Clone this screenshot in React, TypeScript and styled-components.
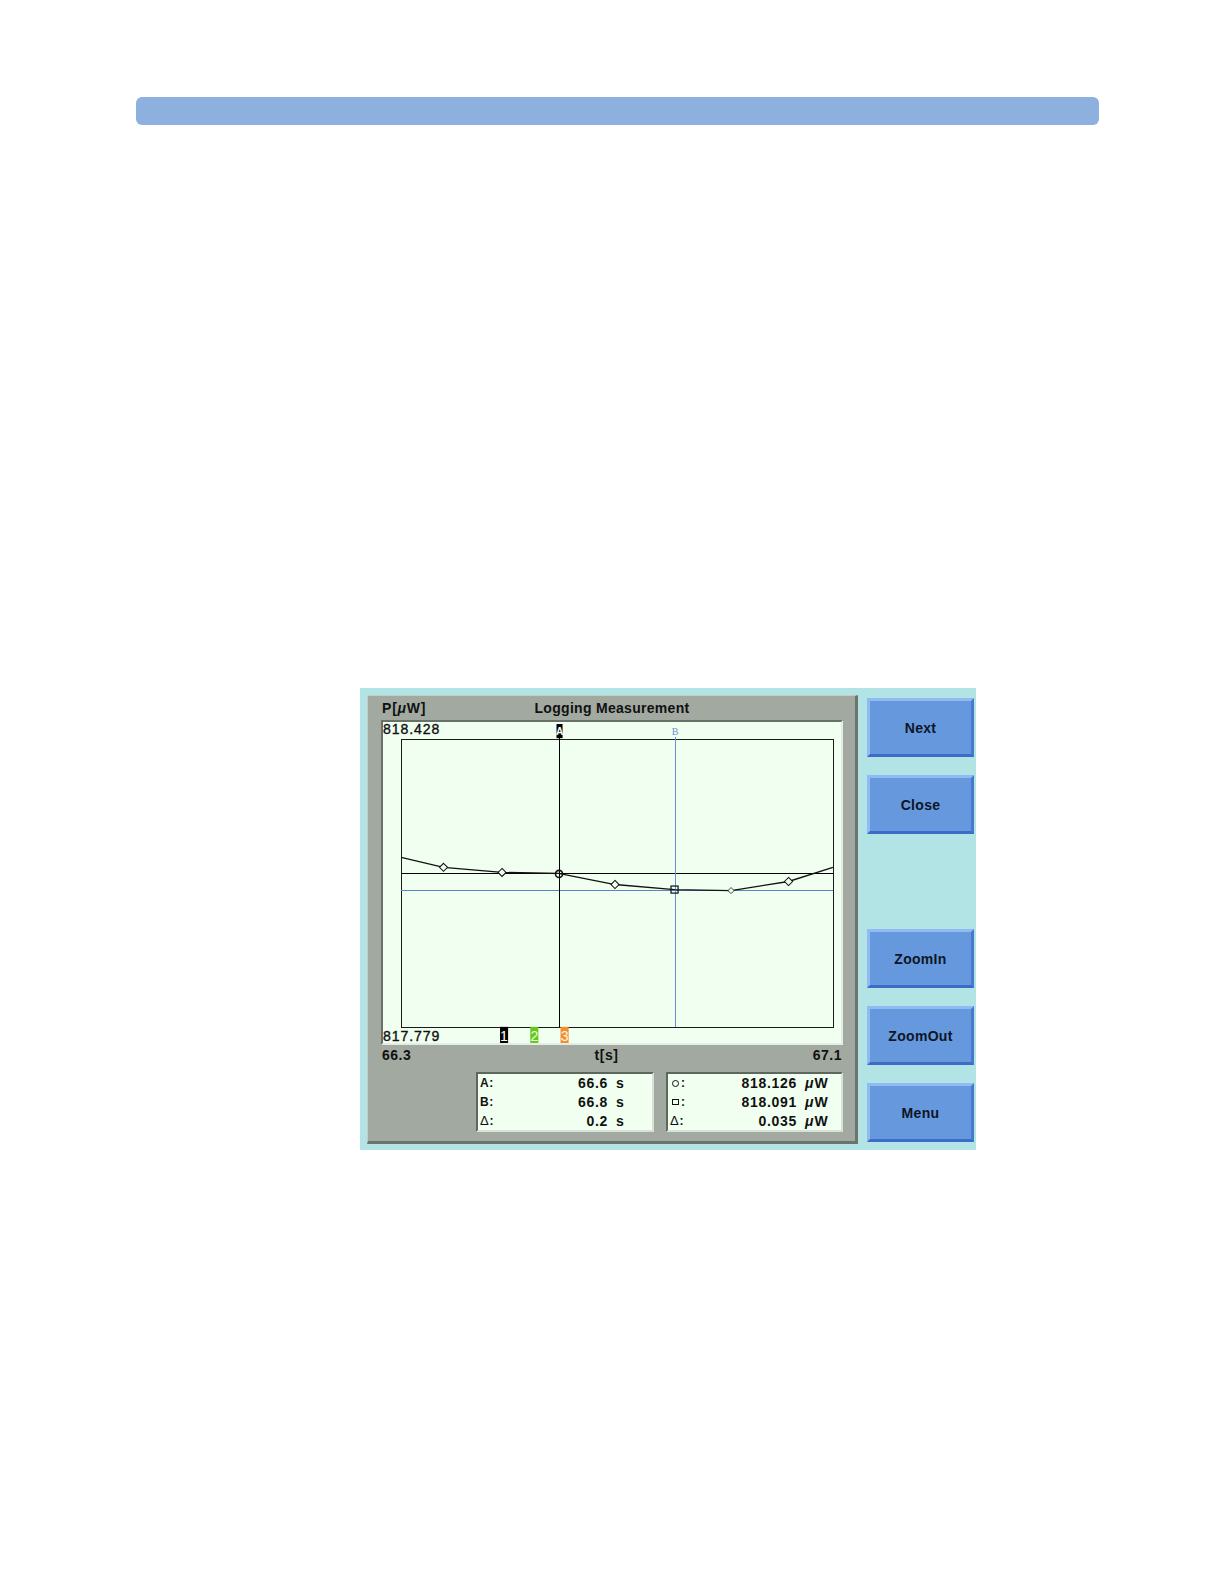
import React from "react";
import styled, { createGlobalStyle } from "styled-components";

const Global = createGlobalStyle`
  html, body { margin: 0; padding: 0; background: #ffffff; }
  body { font-family: "Liberation Sans", Arial, sans-serif; }
`;

const Page = styled.div`
  width: 1222px;
  min-height: 1582px;
  box-sizing: border-box;
  padding-top: 97px;
`;

const HeaderBar = styled.div`
  margin-left: 136px;
  width: 963px;
  height: 28px;
  border-radius: 6px;
  background: #8db0de;
`;

const Device = styled.div`
  margin: 563px 0 0 360px;
  width: 616px;
  height: 462px;
  box-sizing: border-box;
  background: #b2e3e5;
  padding: 7px 2px 6px 7px;
  display: grid;
  grid-template-columns: 491px 107px;
  column-gap: 9px;
  align-items: start;
`;

const Panel = styled.div`
  height: 449px;
  box-sizing: border-box;
  background: #a2a9a0;
  border-top: 1px solid #c4ccc4;
  border-left: 1px solid #c4ccc4;
  border-right: 3px solid #6c746c;
  border-bottom: 3px solid #6c746c;
  padding: 0 12px 9px 13px;
  display: flex;
  flex-direction: column;
  color: #111;
`;

const TitleRow = styled.div`
  height: 24px;
  display: grid;
  grid-template-columns: 1fr auto 1fr;
  align-items: center;
  font-weight: bold;
  font-size: 14px;
  line-height: 18px;
`;

const TitleLeft = styled.span`
  padding-left: 1px;
  letter-spacing: 0.8px;
`;

const Title = styled.span`
  letter-spacing: 0.3px;
`;

const Unit = styled.span`
  font-style: italic;
`;

const PlotBox = styled.div`
  width: 462px;
  height: 325px;
  box-sizing: border-box;
  background: #f0fff0;
  border-style: solid;
  border-width: 2px;
  border-color: #687068 #e4ece4 #e4ece4 #687068;
`;

const ChartSvg = styled.svg`
  display: block;
  font-family: "Liberation Sans", Arial, sans-serif;
`;

const AxisRow = styled.div`
  height: 19px;
  margin-bottom: 8px;
  display: grid;
  grid-template-columns: 1fr auto 1fr;
  align-items: center;
  font-weight: bold;
  font-size: 14px;
  line-height: 18px;
  letter-spacing: 0.5px;
`;

const AxisLeft = styled.span`
  padding-left: 1px;
`;

const AxisCenter = styled.span`
  padding-right: 11px;
`;

const AxisRight = styled.span`
  text-align: right;
  padding-right: 1px;
`;

const InfoRow = styled.div`
  display: flex;
  justify-content: flex-end;
  gap: 12px;
`;

const InfoBox = styled.div<{ $w: number }>`
  width: ${(p) => p.$w}px;
  height: 60px;
  box-sizing: border-box;
  background: #f0fff0;
  border-style: solid;
  border-width: 2px;
  border-color: #5e665e #d8e0d8 #d8e0d8 #5e665e;
  padding: 0 0 0 2px;
  display: grid;
  grid-template-columns: 1fr auto 36px;
  grid-template-rows: repeat(3, 1fr);
  column-gap: 8px;
  align-items: center;
  font-weight: bold;
  font-size: 14px;
  line-height: 18px;
  letter-spacing: 0.7px;
`;

const Label = styled.span`
  display: flex;
  align-items: center;
  font-size: 12px;
`;

const Value = styled.span`
  text-align: right;
`;

const UnitCell = styled.span`
  letter-spacing: 1px;
`;

const CircleMark = styled.span`
  display: inline-block;
  width: 5px;
  height: 5px;
  border: 1px solid #111;
  border-radius: 50%;
  margin: 0 2px 0 2px;
`;

const SquareMark = styled.span`
  display: inline-block;
  width: 5px;
  height: 4px;
  border: 1px solid #111;
  margin: 0 2px 0 2px;
`;

const DeltaMark = styled.span`
  font-weight: normal;
  font-size: 13px;
`;

const ButtonColumn = styled.div`
  padding-top: 3px;
  display: grid;
  grid-template-rows: repeat(6, 59px);
  row-gap: 18px;
`;

const SoftKey = styled.button`
  width: 107px;
  height: 59px;
  margin: 0;
  padding: 0;
  box-sizing: border-box;
  background: #6598dc;
  border-style: solid;
  border-width: 3px;
  border-color: #90baf2 #4a78d0 #3d6bc8 #90baf2;
  font-family: "Liberation Sans", Arial, sans-serif;
  font-weight: bold;
  font-size: 14px;
  color: #0e1626;
  letter-spacing: 0.3px;
`;

const EmptySlot = styled.div``;

const points: [number, number][] = [
  [20, 136],
  [62, 146],
  [120, 151],
  [176, 152],
  [232, 163],
  [291, 168],
  [347, 169],
  [404, 160],
  [448, 146],
];

const diamond = (x: number, y: number, r = 4) =>
  `M${x} ${y - r} L${x + r} ${y} L${x} ${y + r} L${x - r} ${y} Z`;

const Chart: React.FC = () => (
  <ChartSvg width={458} height={321} viewBox="2 2 454 318" preserveAspectRatio="none">
    <g shapeRendering="crispEdges">
      <rect x={20.5} y={19.5} width={428} height={285} fill="none" stroke="#1a1a1a" strokeWidth={1} />
      <line x1={20} y1={152.5} x2={448} y2={152.5} stroke="#000" strokeWidth={1} />
      <line x1={20} y1={168.5} x2={448} y2={168.5} stroke="#5a82cc" strokeWidth={1} />
      <line x1={176.5} y1={5} x2={176.5} y2={304} stroke="#000" strokeWidth={1} />
      <line x1={291.5} y1={17} x2={291.5} y2={304} stroke="#6a8fd2" strokeWidth={1} />
    </g>
    <polyline
      points={points.map((p) => p.join(",")).join(" ")}
      fill="none"
      stroke="#111"
      strokeWidth={1.3}
    />
    {[points[1], points[2], points[4], points[7]].map(([x, y], i) => (
      <path key={i} d={diamond(x, y)} fill="#f0fff0" stroke="#111" strokeWidth={1} />
    ))}
    <path d={diamond(347, 169, 3)} fill="#f0fff0" stroke="#333" strokeWidth={0.9} />
    <circle cx={176.5} cy={152.5} r={3.5} fill="none" stroke="#111" strokeWidth={1.6} />
    <rect x={287.5} y={164.5} width={7} height={7} fill="none" stroke="#111" strokeWidth={1.2} />
    <rect x={174} y={4} width={6} height={14} fill="#000" />
    <text x={177} y={15} fontSize={10} fill="#fff" textAnchor="middle" fontWeight="bold">A</text>
    <text x={291.5} y={15} fontSize={10} fill="#6a8fd2" textAnchor="middle" fontFamily="Liberation Serif, serif">B</text>
    <text x={2} y={14} fontSize={14} fill="#111" stroke="#111" strokeWidth={0.35} letterSpacing={0.9}>818.428</text>
    <text x={2} y={318} fontSize={14} fill="#111" stroke="#111" strokeWidth={0.35} letterSpacing={0.9}>817.779</text>
    <rect x={118} y={304} width={8} height={17} fill="#000" />
    <text x={122} y={318} fontSize={14} fill="#fff" textAnchor="middle">1</text>
    <rect x={148} y={304} width={8} height={17} fill="#63c920" />
    <text x={152} y={318} fontSize={14} fill="#e8ffd8" textAnchor="middle">2</text>
    <rect x={178} y={304} width={8} height={17} fill="#f0902c" />
    <text x={182} y={318} fontSize={14} fill="#fff4e8" textAnchor="middle">3</text>
  </ChartSvg>
);

const timeRows = [
  { label: <span>A:</span>, value: "66.6" },
  { label: <span>B:</span>, value: "66.8" },
  { label: <><DeltaMark>Δ</DeltaMark>:</>, value: "0.2" },
];

const powerRows = [
  { label: <><CircleMark />:</>, value: "818.126" },
  { label: <><SquareMark />:</>, value: "818.091" },
  { label: <><DeltaMark>Δ</DeltaMark>:</>, value: "0.035" },
];

export default function App() {
  return (
    <>
      <Global />
      <Page>
        <HeaderBar />
        <Device>
          <Panel>
            <TitleRow>
              <TitleLeft>
                P[<Unit>μ</Unit>W]
              </TitleLeft>
              <Title>Logging Measurement</Title>
              <span />
            </TitleRow>
            <PlotBox>
              <Chart />
            </PlotBox>
            <AxisRow>
              <AxisLeft>66.3</AxisLeft>
              <AxisCenter>t[s]</AxisCenter>
              <AxisRight>67.1</AxisRight>
            </AxisRow>
            <InfoRow>
              <InfoBox $w={178}>
                {timeRows.map((r, i) => (
                  <React.Fragment key={i}>
                    <Label>{r.label}</Label>
                    <Value>{r.value}</Value>
                    <UnitCell>s</UnitCell>
                  </React.Fragment>
                ))}
              </InfoBox>
              <InfoBox $w={177}>
                {powerRows.map((r, i) => (
                  <React.Fragment key={i}>
                    <Label>{r.label}</Label>
                    <Value>{r.value}</Value>
                    <UnitCell>
                      <Unit>μ</Unit>W
                    </UnitCell>
                  </React.Fragment>
                ))}
              </InfoBox>
            </InfoRow>
          </Panel>
          <ButtonColumn>
            <SoftKey>Next</SoftKey>
            <SoftKey>Close</SoftKey>
            <EmptySlot />
            <SoftKey>ZoomIn</SoftKey>
            <SoftKey>ZoomOut</SoftKey>
            <SoftKey>Menu</SoftKey>
          </ButtonColumn>
        </Device>
      </Page>
    </>
  );
}
